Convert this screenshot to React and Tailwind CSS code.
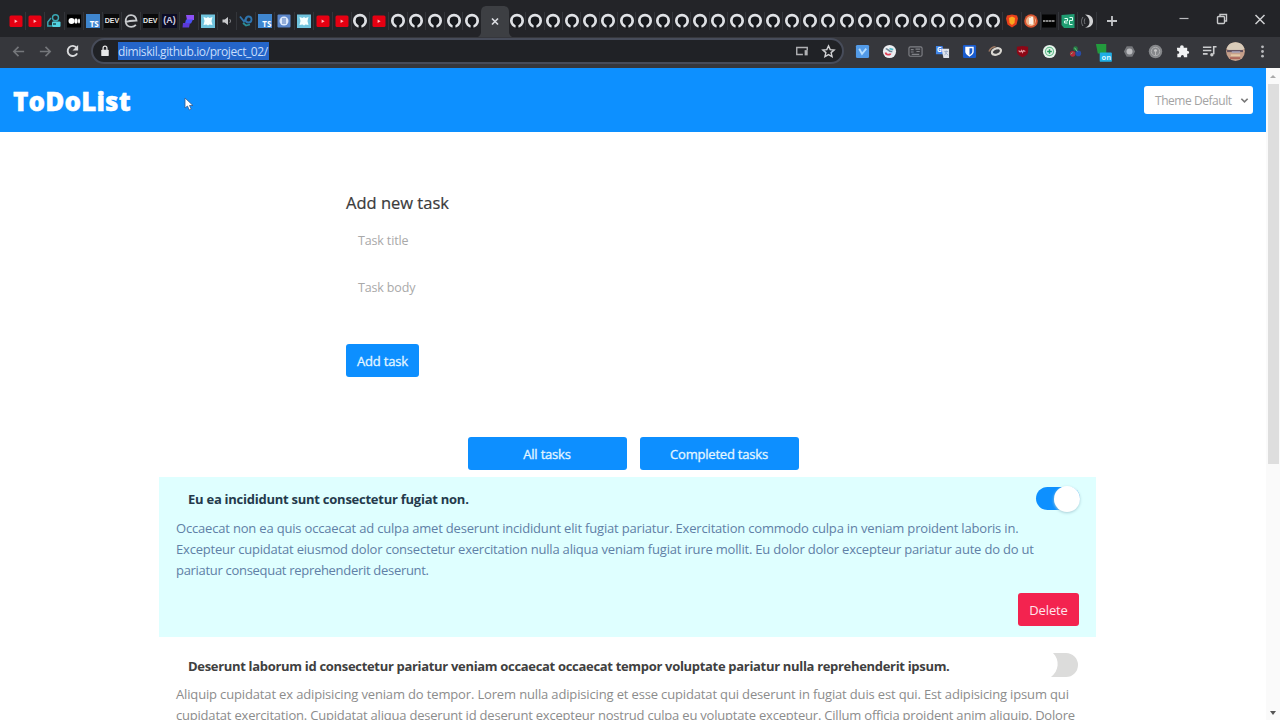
import React from "react";

const Github = () => (
  <svg viewBox="0 0 16 16" className="h-4 w-4">
    <circle cx="8" cy="7.800" r="5.700" fill="#17191d" stroke="#dfe1e5" strokeWidth="2.700" />
    <path d="M4.200 5.500l.8-1.300 1.500.5h3l1.500-.5.8 1.300-.2 4-2.200 2v4.300H6.600v-4.300l-2.200-2z" fill="#17191d" />
  </svg>
);

const Youtube = () => (
  <svg viewBox="0 0 16 16" className="h-4 w-4">
    <rect x="1.500" y="2.500" width="13" height="11.500" rx="1.500" fill="#e60012" />
    <path d="M6.600 6.500l3 1.800-3 1.800z" fill="#ffb9bd" />
  </svg>
);

const Cyan = () => (
  <svg viewBox="0 0 16 16" className="h-4 w-4" fill="none" stroke="#3aa9b5" strokeWidth="1.400">
    <circle cx="9.500" cy="4.800" r="3" />
    <path d="M5 5L1.800 9v4h4" />
    <rect x="6" y="8.500" width="8.500" height="5.500" rx="1" fill="#53d3e2" stroke="none" />
    <path d="M7 11h3" stroke="#17474d" />
  </svg>
);

const Medium = () => (
  <svg viewBox="0 0 16 16" className="h-4 w-4">
    <rect x="1" y="1.500" width="14" height="13" fill="#000" />
    <circle cx="5.500" cy="8" r="3" fill="#fff" />
    <ellipse cx="10" cy="8" rx="1.700" ry="2.800" fill="#fff" />
    <ellipse cx="13" cy="8" rx="1" ry="2.500" fill="#fff" />
  </svg>
);

const Ts = () => (
  <span className="flex h-[14px] w-[14px] items-end justify-end bg-[#3f86cf] pr-px text-[8px] leading-[8px] font-bold text-white">TS</span>
);

const Dev = () => (
  <span className="flex h-[14px] w-[15px] items-center justify-center bg-[#0a0a0b] font-['Liberation_Sans'] text-[7px] font-bold text-[#e6e6e6]">DEV</span>
);

const Edge = () => (
  <svg viewBox="0 0 16 16" className="h-4 w-4" fill="none" stroke="#c9cbce" strokeWidth="1.800">
    <path d="M2 9.500C5 8 10 7.500 13.500 7.500 13 3.800 10.500 2.200 8 2.200 4.500 2.200 2.700 5 2.700 8.200c0 3.400 2.300 5.600 5.500 5.600 2 0 3.500-.7 4.700-2" />
  </svg>
);

const LetterA = () => (
  <span className="flex h-[14px] w-[15px] items-center justify-center bg-[#0c0c24] font-['Liberation_Sans'] text-[9px] font-bold text-[#cfcfe2]">(A)</span>
);

const Purple = () => (
  <svg viewBox="0 0 16 16" className="h-4 w-4">
    <path d="M5 2h8v5H6z" fill="#8d50f5" />
    <path d="M5 6.500h7l-2 4H4z" fill="#4c4ff5" />
    <path d="M2 10h7l-1 4.500H1.500z" fill="#5b39d8" />
  </svg>
);

const Light = () => (
  <svg viewBox="0 0 16 16" className="h-4 w-4">
    <rect x="1" y="1.500" width="14" height="13.500" fill="#6fc3dd" />
    <path d="M3.500 4l3 1L8 4l1.500 1 3-1-1 4 1 4-3-.6L8 12.500l-1.500-1-3 .5 1-4z" fill="#f4ffff" />
  </svg>
);

const Speaker = () => (
  <svg viewBox="0 0 16 16" className="h-4 w-4">
    <path d="M3.500 6.500h2.300L9 4v8L5.800 9.500H3.500z" fill="#c8c9cc" />
    <path d="M10.500 6c1.300 1 1.300 3 0 4" stroke="#8a8c90" fill="none" />
  </svg>
);

const Waves = () => (
  <svg viewBox="0 0 16 16" className="h-4 w-4" fill="none" stroke="#2f74ad" strokeWidth="1.800">
    <path d="M2 3.500l4 5 3-4" />
    <circle cx="10.500" cy="6.500" r="3" />
    <path d="M5 10l3 2.500 4-1" stroke="#2b8d96" />
  </svg>
);

const BlueRound = () => (
  <svg viewBox="0 0 16 16" className="h-4 w-4">
    <rect x="1.500" y="1.500" width="13" height="13" rx="1" fill="#5b86c9" />
    <circle cx="8" cy="8" r="4.500" fill="#dbe8fb" />
    <path d="M6 6h4M6 8h4M6 10h4" stroke="#4b73b8" strokeWidth="1.200" />
  </svg>
);

const Shield = () => (
  <svg viewBox="0 0 16 16" className="h-4 w-4">
    <path d="M3 2.500L8 1.500l5 1 1 3-1.500 6L8 14.500 3.500 11.500 2 5.500z" fill="#e8401c" />
    <path d="M5 5l3-1.500L11 5l-.5 5L8 12l-2.500-2z" fill="#fba81f" />
  </svg>
);

const OrangeRound = () => (
  <svg viewBox="0 0 16 16" className="h-4 w-4">
    <circle cx="8" cy="8" r="6.800" fill="#d95531" />
    <circle cx="8" cy="8" r="5" fill="#efb78d" />
    <path d="M9 4v7.500M7 5v6" stroke="#fff" strokeWidth="1.600" />
    <path d="M11 4l1 7" stroke="#d05a2f" />
  </svg>
);

const BlackBar = () => (
  <svg viewBox="0 0 16 16" className="h-4 w-4">
    <rect x="1" y="1.500" width="14" height="13" fill="#030303" />
    <path d="M2 8h12" stroke="#b6b6b6" strokeWidth="1.600" strokeDasharray="2.500 .5" />
  </svg>
);

const GreenBox = () => (
  <svg viewBox="0 0 16 16" className="h-4 w-4">
    <path d="M1.500 2l13-1v14H4l-2.500-3z" fill="#1f9d72" />
    <path d="M4.500 5.500h3v2.500h-3V10h3M9.500 4.500h3v3h-3v4h3" stroke="#dffff2" fill="none" />
  </svg>
);

const Moon = () => (
  <svg viewBox="0 0 16 16" className="h-4 w-4">
    <path d="M6 1.500c6 0 8.500 3.500 8 7.500s-4 6-8 5.500c3-1 4.500-2.500 4.500-5.500S9 3 6 1.500z" fill="#d2d3d5" />
    <path d="M4 4c-2 3-2 6 0 9M6 5.500c-1 2-1 3.500 0 5.500" stroke="#77797d" fill="none" />
  </svg>
);

const firstTabs = [Youtube, Youtube, Cyan, Medium, Ts, Dev, Edge, Dev, LetterA, Purple, Light, Speaker, Waves, Ts, BlueRound, Light, Youtube];
const secondTabs = [Youtube, Github, Youtube, Github, Github, Github, Github, Github];
const lastTabs = [Shield, OrangeRound, BlackBar, GreenBox, Moon];

function Tabs({ items, className }) {
  return (
    <div className={"flex h-[18px] " + className}>
      {items.map((Icon, i) => (
        <div key={i} className="flex flex-1 items-center justify-center border-r border-[#33353a]">
          <Icon />
        </div>
      ))}
    </div>
  );
}

function TabStrip() {
  return (
    <div className="flex h-[37px] items-center bg-[#232428] pt-[5px] pl-[7px]">
      <Tabs items={firstTabs} className="w-[326px]" />
      <Tabs items={secondTabs} className="w-[149px]" />
      <div className="-mr-[2px] -ml-[2px] flex h-[32px] w-[30px] items-center justify-center">
        <svg viewBox="0 0 34 32" className="h-[32px] w-[34px] shrink-0">
          <path d="M0 32C3 30 3 28 3 26V7c0-4 2-6 6-6h16c4 0 6 2 6 6v19c0 2 0 4 3 6z" fill="#3d3f43" />
          <path d="M14 13.500l6 6M20 13.500l-6 6" stroke="#dadce0" strokeWidth="1.700" />
        </svg>
      </div>
      <Tabs items={Array(27).fill(Github)} className="w-[495px]" />
      <Tabs items={lastTabs} className="w-[94px]" />
      <svg viewBox="0 0 12 12" className="ml-[9px] h-3 w-3" stroke="#c4c6c9" strokeWidth="1.800">
        <path d="M6 1v10M1 6h10" />
      </svg>
      <div className="mr-[14px] mb-[4px] ml-auto flex items-center gap-[26px]">
        <svg viewBox="0 0 12 12" className="h-3 w-3" stroke="#b9babd" strokeWidth="1.200"><path d="M1.500 5.500h9" /></svg>
        <svg viewBox="0 0 12 12" className="h-3 w-3" fill="none" stroke="#c8c9cb" strokeWidth="1.400">
          <rect x="1.500" y="3.500" width="7" height="7" rx="1" />
          <path d="M4 3.500v-2h6.500V8H8.500" />
        </svg>
        <svg viewBox="0 0 12 12" className="h-3 w-3" stroke="#cfd0d2" strokeWidth="1.500"><path d="M1.500 2l9 9M10.500 2l-9 9" /></svg>
      </div>
    </div>
  );
}

const extensions = [
  <g><rect x="1" y="1" width="14" height="14" rx="1.500" fill="#539be8" /><path d="M4.500 5L7.500 10.500 12 5" stroke="#b5ddff" strokeWidth="2" fill="none" /></g>,
  <g><circle cx="8" cy="8" r="7" fill="#eceef2" /><path d="M4 5c3 0 3 4 7 3" stroke="#6d8494" strokeWidth="1.600" fill="none" /><path d="M4 9c0 3 5 3 5 1" stroke="#df4358" strokeWidth="2" fill="none" /><path d="M8 5l4 1" stroke="#54bdca" strokeWidth="1.800" /></g>,
  <g fill="none" stroke="#808287" strokeWidth="1.200"><rect x="1" y="3" width="14" height="10" rx="1.500" /><path d="M3 6h3M3 8.500h3M8 5.500h5M9 8h3.500M4 11h8" /></g>,
  <g><path d="M1 2h7l2 9H1z" fill="#4285e8" /><path d="M7 5h8v10H9z" fill="#dfe3ea" /><text x="2" y="9" fontSize="7" fontWeight="700" fill="#fff">G</text><path d="M10 8h4M12 7v1c0 2-1 3-2 4M11 9l3 3" stroke="#9badca" fill="none" /></g>,
  <g><rect x="1" y="1" width="14" height="14" rx="1.500" fill="#195bcd" /><path d="M3.500 3h9v5c0 3-3 4.500-4.500 5.500C6.500 12.500 3.500 11 3.500 8z" fill="#fff" /><path d="M8 4.500h3V8c0 2-2 3-3 3.800z" fill="#195bcd" /></g>,
  <g fill="none"><ellipse cx="9" cy="8" rx="5" ry="3.200" stroke="#d8d6d1" strokeWidth="2.400" transform="rotate(-22 9 8)" /><path d="M1 8c2-4 4-5 7-5" stroke="#9c7863" strokeWidth="1.500" /><circle cx="9" cy="8" r="2" fill="#3d3d3f" /></g>,
  <g><path d="M2 3l6-1 6 1v5c0 3-3 5-6 6-3-1-6-3-6-6z" fill="#8c0716" /><path d="M4 7c1 2 2 2 3 0l1 2 1-2 2 1" stroke="#e69aa1" strokeWidth="1.300" fill="none" /></g>,
  <g><circle cx="8" cy="8" r="7" fill="#e8f4ed" /><circle cx="8" cy="8" r="4.300" fill="none" stroke="#6cc093" strokeWidth="1.300" /><path d="M8 5.500v5M5.500 8h5" stroke="#1e985a" strokeWidth="1.600" /></g>,
  <g><circle cx="8" cy="5" r="2.500" fill="#267b45" /><circle cx="5" cy="10.500" r="3" fill="#b62a38" /><circle cx="11" cy="10" r="3" fill="#294ca5" /><path d="M7 4l3 4M3 11l2-2" stroke="#71d28c" /></g>,
  <g><path d="M1 0h11v10H3z" fill="#239b3d" /><rect x="5" y="9" width="13" height="10" rx="1" fill="#20aee4" /><text x="7" y="17" fontSize="8" fontWeight="700" fill="#d7f5ff">on</text></g>,
  <g><path d="M5 2.500h6L14 8l-3 5.500H5L2 8z" fill="#74767a" /><circle cx="8" cy="8" r="3.200" fill="#bcbdc0" /></g>,
  <g fill="none"><circle cx="8" cy="8" r="7.200" fill="#85878a" /><circle cx="8" cy="8" r="4.500" stroke="#b0b1b3" /><circle cx="8" cy="7" r="1.500" fill="#ccc" /><path d="M8 7v5" stroke="#bcbcbc" /></g>,
  <path d="M2 4h3.500c-.8-3.500 4.500-3.500 3.800 0H13v3.500c2.800-.2 2.800 3.200 0 3V14H9.500c.2-3-3.300-3-3.300 0H2.500v-3.500c2.700.3 2.700-3 0-3z" fill="#f1f2f3" />,
  <g stroke="#cccdcf" strokeWidth="1.700" fill="none"><path d="M1 3.500h9M1 7h9M1 10.500h5M12.500 11V3h3" /><circle cx="10.500" cy="11.500" r="1.800" fill="#ccc" stroke="none" /></g>,
  <g><circle cx="8" cy="8" r="10" fill="#c59f8a" /><path d="M-1.500 5A10 10 0 0117.500 5L14 7H2z" fill="#d8cbb9" /><path d="M-1 7.500h17" stroke="#635360" strokeWidth="2.300" /><path d="M4 8.500h9" stroke="#a9a5bd" strokeWidth="1.500" /><path d="M3 12h10" stroke="#e5c9a5" strokeWidth="2" /><path d="M2 15h11" stroke="#a8584d" strokeWidth="1.500" /></g>,
  <g fill="#b9babd"><circle cx="8" cy="3" r="1.500" /><circle cx="8" cy="8" r="1.500" /><circle cx="8" cy="13" r="1.500" /></g>,
];

function Toolbar() {
  return (
    <div className="flex h-[31px] items-center bg-[#36373c] pb-[3px]">
      <div className="flex w-[91px] items-center gap-[12px] pl-[11px]">
        <svg viewBox="0 0 16 16" className="h-[15px] w-[15px]" fill="none" stroke="#75777b" strokeWidth="1.700"><path d="M14 8H3M8 3L3 8l5 5" /></svg>
        <svg viewBox="0 0 16 16" className="h-[15px] w-[15px]" fill="none" stroke="#75777b" strokeWidth="1.700"><path d="M2 8h11M8 3l5 5-5 5" /></svg>
        <svg viewBox="0 0 16 16" className="h-[15px] w-[15px]" fill="none" stroke="#d9dadc" strokeWidth="2"><path d="M12.500 4A5.400 5.400 0 1013 10" /><path d="M14 1v6H8z" fill="#d9dadc" stroke="none" /></svg>
      </div>
      <div className="flex h-[26px] w-[753px] items-center rounded-full border-2 border-[#474c5a] bg-[#202226]">
        <svg viewBox="0 0 12 14" className="ml-[7px] h-[12px] w-[10px]"><rect x="1.500" y="5.500" width="9" height="7.500" rx="1" fill="#e7e8e9" /><path d="M3.700 6V3.500a2.300 2.300 0 014.600 0V6" fill="none" stroke="#e7e8e9" strokeWidth="1.500" /></svg>
        <span className="ml-[8px] flex h-[18px] w-[151px] items-center bg-[#2465c9] pt-px text-[12px] tracking-[-0.41px] whitespace-nowrap text-[#c7defc]">dimiskil.github.io/project_02/</span>
        <svg viewBox="0 0 16 16" className="mr-[12px] ml-auto h-[14px] w-[14px]" fill="none" stroke="#b0b1b4" strokeWidth="1.600"><path d="M9 12H2V4h12v3" /><rect x="11" y="7" width="3.500" height="6" fill="#b0b1b4" stroke="none" /></svg>
        <svg viewBox="0 0 16 16" className="mr-[6px] h-[15px] w-[15px]" fill="none" stroke="#d1d2d4" strokeWidth="1.500"><path d="M8 2l1.800 4 4.200.4-3.200 2.800 1 4.300L8 11.300l-3.800 2.200 1-4.300L2 6.400 6.200 6z" /></svg>
      </div>
      <div className="ml-[5px] flex w-[427px]">
        {extensions.map((icon, i) => (
          <div key={i} className="flex flex-1 justify-center">
            <svg viewBox="0 0 16 16" className="h-[15px] w-[15px] overflow-visible">{icon}</svg>
          </div>
        ))}
      </div>
    </div>
  );
}

function Line({ children, className }) {
  return <span className={"block whitespace-nowrap " + className}>{children}</span>;
}

const button = "flex h-[33px] items-center justify-center rounded-[3px] bg-[#0d8fff] pt-[2px] text-[13px] text-[#e4f6ff] [-webkit-text-stroke:0.3px]";

export default function App() {
  return (
    <div className="flex h-[720px] w-[1280px] flex-col overflow-hidden bg-white font-['Open_Sans','Noto_Sans',sans-serif]">
      <TabStrip />
      <Toolbar />
      <div className="flex min-h-0 flex-1">
        <div className="w-[1266px] overflow-hidden">
          <header className="relative flex h-[64px] items-center justify-between bg-[#0d90ff] pr-[13px] pl-[13px]">
            <h1 className="pt-[2px] text-[26px] font-extrabold tracking-[0.15px] text-white [-webkit-text-stroke:0.4px]">ToDoList</h1>
            <div className="flex h-[28px] w-[109px] items-center justify-between rounded-[3px] bg-white pr-[4px] pl-[11px] text-[12px] text-[#a3a3a3]">
              <span className="pt-[2px] tracking-[-0.45px] whitespace-nowrap">Theme Default</span>
              <svg viewBox="0 0 10 10" className="h-[9px] w-[9px]" fill="none" stroke="#777" strokeWidth="1.800"><path d="M1.500 3L5 6.500 8.500 3" /></svg>
            </div>
            <svg viewBox="0 0 10 14" className="absolute top-[29px] left-[184px] h-[14px] w-[10px]"><path d="M1 1v10l2.500-2 1.700 4 2-1-1.700-3.500H9z" fill="#fff" stroke="#345b8f" strokeWidth=".8" /></svg>
          </header>

          <section className="ml-[346px] pt-[59px]">
            <h2 className="h-[24px] text-[16.5px] leading-[24px] text-[#3b3b3b] [-webkit-text-stroke:0.2px]">Add new task</h2>
            <div className="mt-[16px] h-[20px] pl-[12px] text-[12.5px] leading-[20px] tracking-[-0.15px] text-[#a9a9a9]">Task title</div>
            <div className="mt-[27px] h-[20px] pl-[12px] text-[12.5px] leading-[20px] tracking-[-0.15px] text-[#a9a9a9]">Task body</div>
            <div className={button + " mt-[46px] w-[73px] tracking-[-0.2px]"}>Add task</div>
          </section>

          <div className="mt-[60px] flex justify-center gap-[13px]">
            <div className={button + " w-[159px] tracking-[-0.2px]"}>All tasks</div>
            <div className={button + " w-[159px] tracking-[-0.2px]"}>Completed tasks</div>
          </div>

          <section className="mt-[7px] ml-[159px] w-[937px]">
            <article className="h-[160px] bg-[#dfffff] pt-[8px] pr-[16px] pl-[17px]">
              <div className="flex h-[27px] items-center justify-between pl-[12px]">
                <Line className="pt-[2px] text-[13px] font-bold tracking-[-0.25px] text-[#243a4c]">Eu ea incididunt sunt consectetur fugiat non.</Line>
                <div className="flex h-[23px] w-[44px] items-center justify-end rounded-full bg-[#0d90ff]">
                  <div className="h-[26px] w-[26px] shrink-0 rounded-full bg-white shadow-[0_1px_3px_#a9cfd8]" />
                </div>
              </div>
              <div className="pt-[6px] text-[13px] leading-[21px] text-[#6080a6]">
                <Line className="tracking-[-0.182px]">Occaecat non ea quis occaecat ad culpa amet deserunt incididunt elit fugiat pariatur. Exercitation commodo culpa in veniam proident laboris in.</Line>
                <Line className="tracking-[-0.196px]">Excepteur cupidatat eiusmod dolor consectetur exercitation nulla aliqua veniam fugiat irure mollit. Eu dolor dolor excepteur pariatur aute do do ut</Line>
                <Line className="tracking-[-0.3px]">pariatur consequat reprehenderit deserunt.</Line>
              </div>
              <div className="mt-[12px] mr-[1px] ml-auto flex h-[33px] w-[61px] items-center justify-center rounded-[3px] bg-[#f3234f] pt-[2px] text-[13px] tracking-[-0.1px] text-[#ffe4ec]">Delete</div>
            </article>
            <article className="pt-[16px] pr-[18px] pl-[17px]">
              <div className="flex h-[24px] items-center justify-between pl-[12px]">
                <Line className="pt-[3px] text-[13px] font-bold tracking-[-0.315px] text-[#404040]">Deserunt laborum id consectetur pariatur veniam occaecat occaecat tempor voluptate pariatur nulla reprehenderit ipsum.</Line>
                <svg viewBox="0 0 27 24" className="h-[24px] w-[27px]"><path d="M2 0h13a12 12 0 010 24H0c8-6 9-17 2-24z" fill="#dcdcdb" /></svg>
              </div>
              <div className="mt-[7px] text-[13px] leading-[21px] text-[#8c8c8c]">
                <Line className="tracking-[-0.15px]">Aliquip cupidatat ex adipisicing veniam do tempor. Lorem nulla adipisicing et esse cupidatat qui deserunt in fugiat duis est qui. Est adipisicing ipsum qui</Line>
                <Line className="tracking-[-0.205px]">cupidatat exercitation. Cupidatat aliqua deserunt id deserunt excepteur nostrud culpa eu voluptate excepteur. Cillum officia proident anim aliquip. Dolore</Line>
              </div>
            </article>
          </section>
        </div>
        <div className="flex w-[14px] flex-col items-center bg-[#fafafa]">
          <svg viewBox="0 0 6 4" className="my-[6px] h-[4px] w-[6px]"><path d="M0 4l3-3 3 3z" fill="#aaa" /></svg>
          <div className="h-[380px] w-[11px] bg-[#dedede]" />
          <svg viewBox="0 0 6 4" className="mt-auto mb-[5px] h-[4px] w-[6px]"><path d="M0 0h6L3 4z" fill="#555" /></svg>
        </div>
      </div>
    </div>
  );
}
